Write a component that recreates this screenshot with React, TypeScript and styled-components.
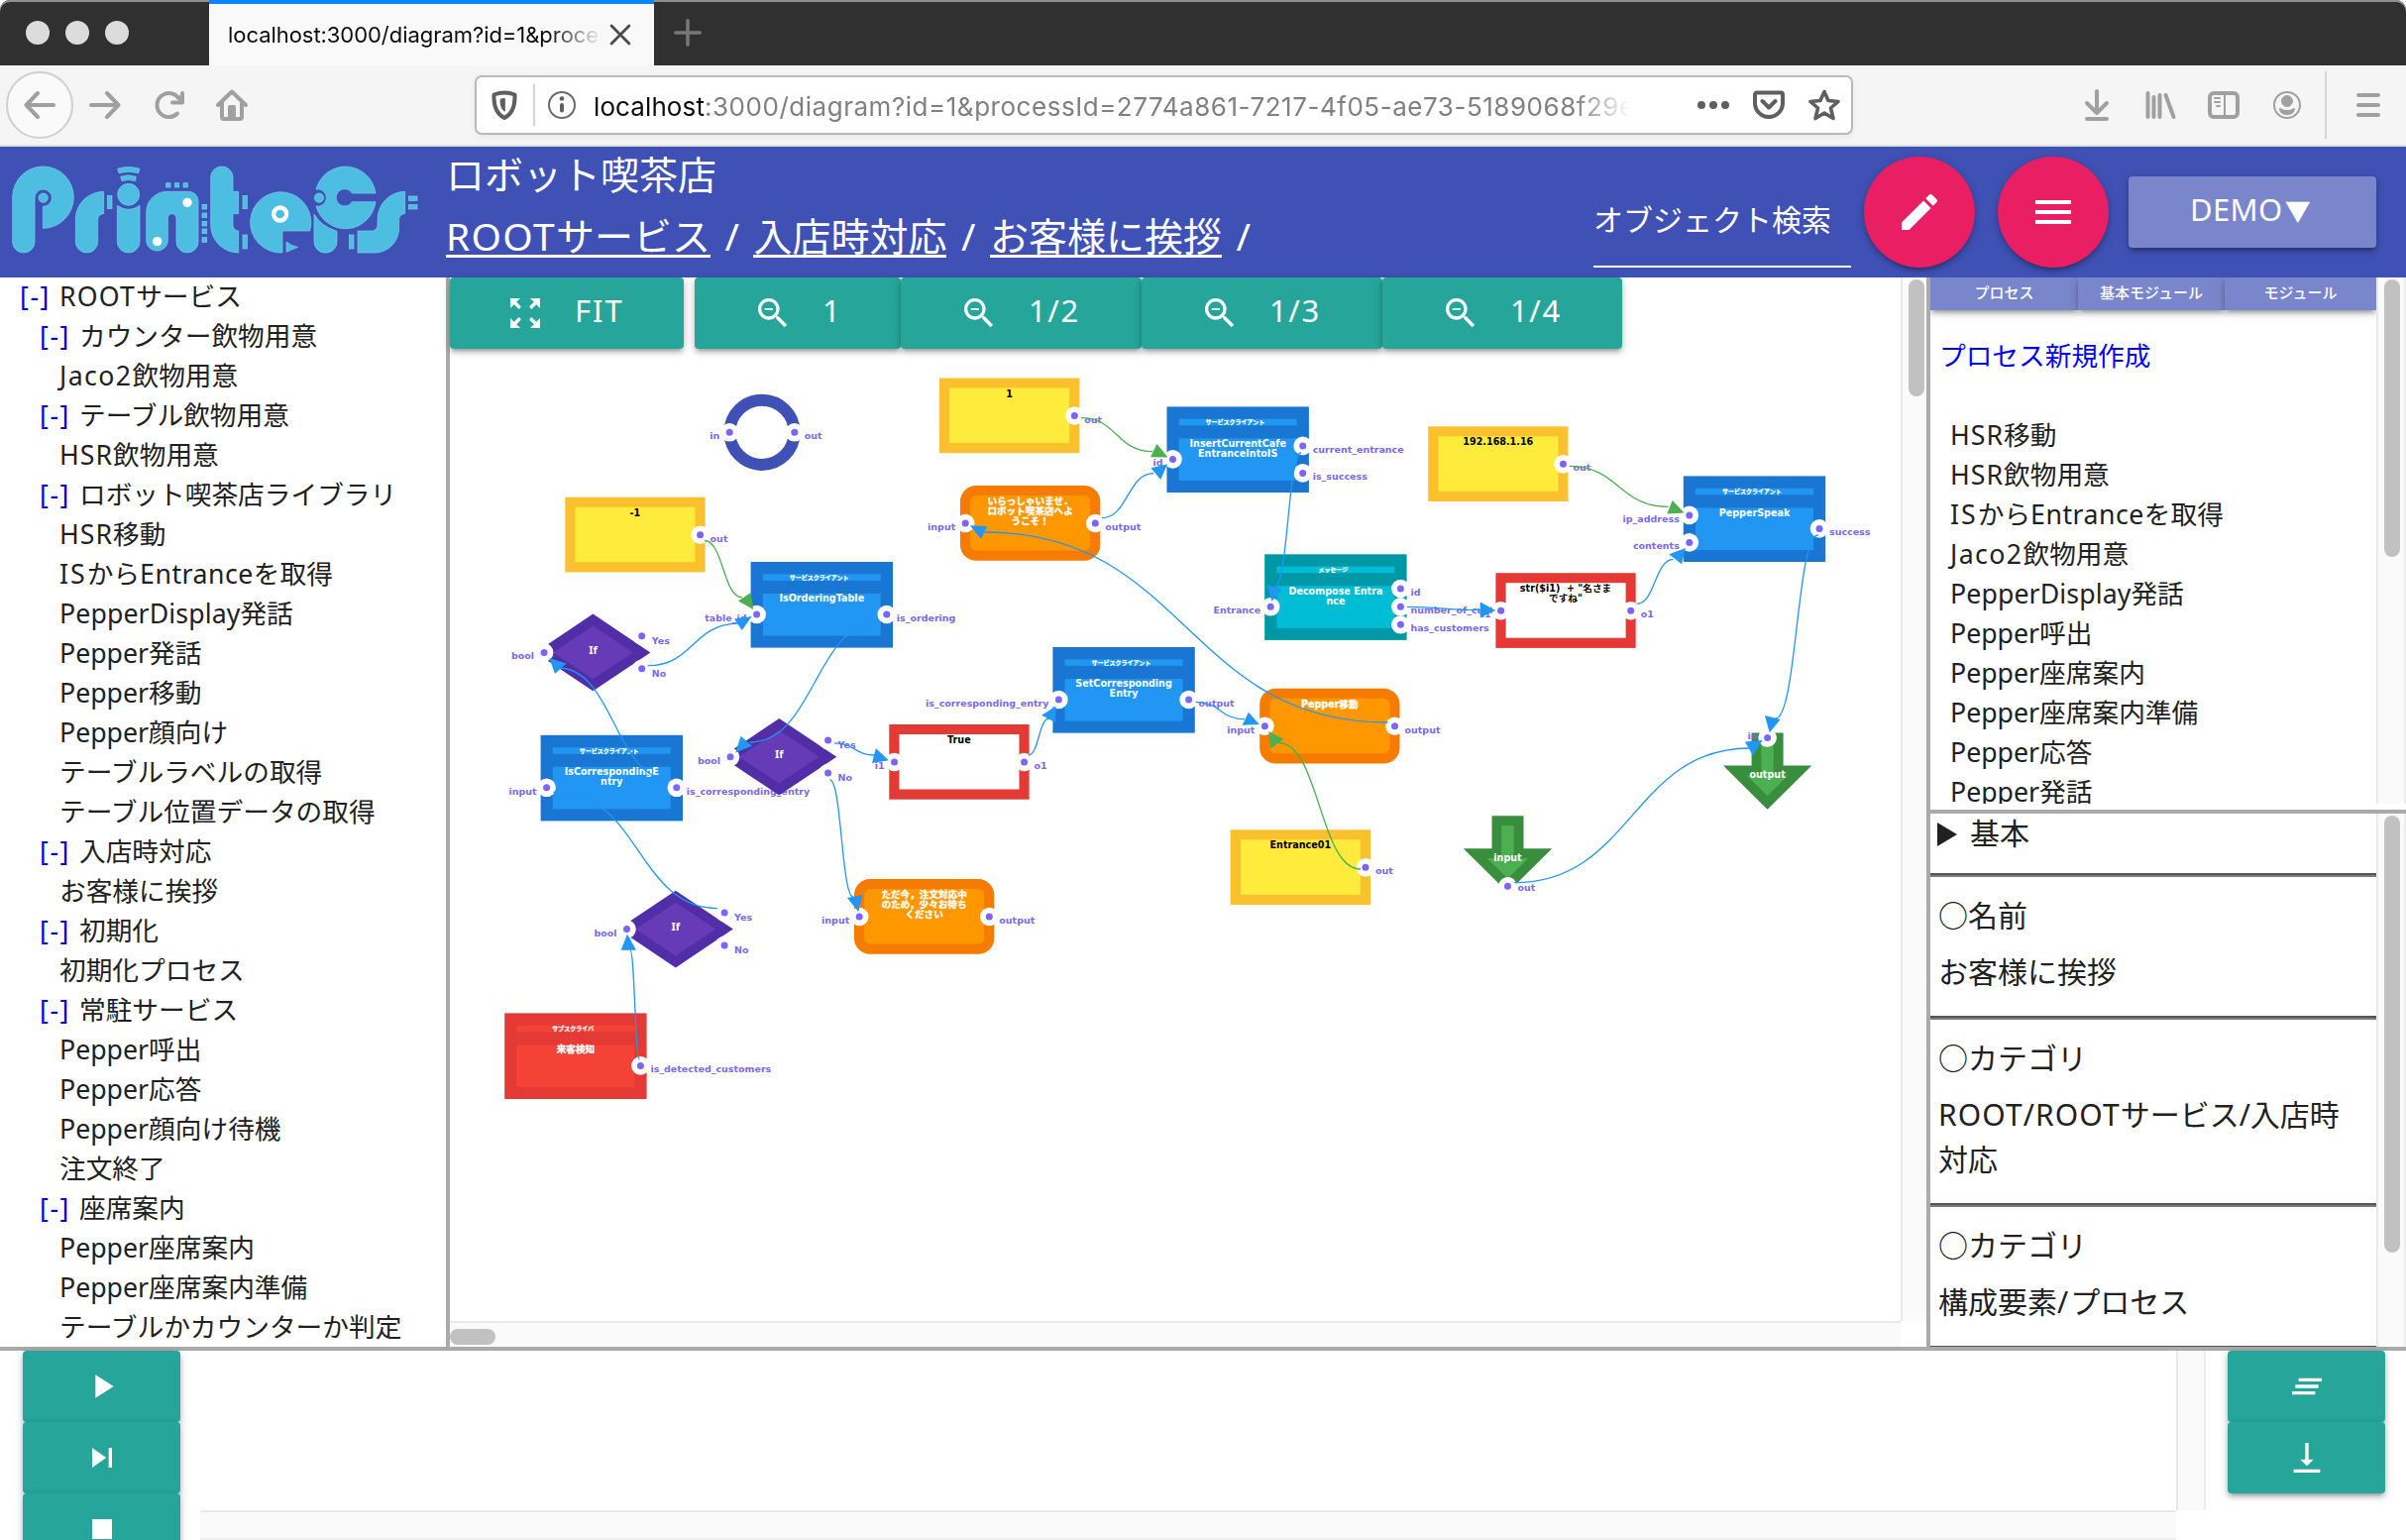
import React from "react";
import styled, { createGlobalStyle } from "styled-components";
import {
  MdEdit, MdMenu, MdZoomOutMap, MdZoomOut, MdPlayArrow, MdSkipNext, MdStop,
  MdClearAll, MdVerticalAlignBottom,
} from "react-icons/md";

const Global = createGlobalStyle`
  *{box-sizing:border-box}
  body{margin:0;background:#fff;overflow:hidden}
`;
const sans = `"Noto Sans","Noto Sans CJK JP",sans-serif`;
const depth = `0 4px 4px rgba(0,0,0,.14),0 6px 2px -4px rgba(0,0,0,.12),0 2px 10px rgba(0,0,0,.2)`;

const Page = styled.div`
  width:2428px;height:1554px;display:flex;flex-direction:column;overflow:hidden;
  font-family:${sans};color:#212121;background:#fff;
`;

/* ---------- browser chrome ---------- */
const TitleBar = styled.div`
  height:66px;flex:none;display:flex;background:#303030;border-radius:10px 10px 0 0;
  box-shadow:inset 0 2px 0 #8f8f8f;overflow:hidden;
`;
const Lights = styled.div`
  width:211px;padding-left:26px;display:flex;align-items:center;gap:16px;
`;
const Light = styled.i`width:24px;height:24px;border-radius:50%;background:#dcdcdc;`;
const BrowserTab = styled.div`
  width:449px;height:66px;background:#f9f9fa;border-top:4px solid #0a84ff;
  display:flex;align-items:center;padding:0 23px 0 19px;justify-content:space-between;
`;
const Fade = styled.div<{ $w: number }>`
  width:${p => p.$w}px;overflow:hidden;white-space:nowrap;
  mask-image:linear-gradient(to right,#000 calc(100% - 56px),transparent);
`;
const TabTitle = styled(Fade)`font:22px Inter,sans-serif;line-height:30px;color:#0c0c0d;letter-spacing:-.05px;`;
const PlusBox = styled.div`width:68px;display:flex;align-items:center;justify-content:center;`;
const NavBar = styled.div`
  height:82px;flex:none;background:#f5f5f6;border-bottom:2px solid #e0e0e0;display:flex;align-items:center;
`;
const BackCircle = styled.div`
  width:68px;height:68px;margin-left:6px;border:2px solid #cfcfcf;border-radius:50%;background:#fafafa;
  display:flex;align-items:center;justify-content:center;
`;
const NavIcons = styled.div`display:flex;gap:32px;margin-left:16px;width:389px;`;
const UrlBox = styled.div`
  width:1391px;height:60px;border:2px solid #b9b9ba;border-radius:7px;background:#fff;
  box-shadow:0 2px 6px rgba(0,0,0,.06);display:flex;align-items:center;padding-left:12px;
`;
const VLine = styled.i<{ $h: number }>`width:2px;height:${p => p.$h}px;background:#d4d4d5;`;
const UrlText = styled(Fade)`
  font:26px Inter,sans-serif;line-height:40px;color:#808080;margin-left:16px;letter-spacing:.53px;padding-top:3px;
  b{font-weight:400;color:#0c0c0d;letter-spacing:.1px}
`;
const UrlTools = styled.div`display:flex;gap:24px;margin-left:68px;align-items:center;`;
const RightTools = styled.div`display:flex;align-items:center;margin-left:auto;padding-right:22px;gap:32px;`;
const MenuGroup = styled.div`display:flex;align-items:center;gap:26px;margin-left:-10px;`;

type IconP = { children: React.ReactNode; s?: number; c?: string; w?: number };
const Ico = ({ children, s = 32, c = "#a0a0a1", w = 4 }: IconP) => (
  <svg width={s} height={s} viewBox="0 0 32 32" fill="none" stroke={c} strokeWidth={w} strokeLinecap="round" strokeLinejoin="round">{children}</svg>
);

/* ---------- app header ---------- */
const Header = styled.header`
  height:132px;flex:none;background:#3f51b5;display:flex;color:#fff;
`;
const LogoBox = styled.div`width:450px;`;
const Titles = styled.div`width:1158px;font-size:39px;line-height:62px;white-space:nowrap;`;
const TitleLine = styled.div`height:62px;margin-top:-3px;`;
const Crumbs = styled.div`display:flex;`;
const Crumb = styled.span`
  height:53px;border-bottom:3px solid #fff;
`;
const Slash = styled.span`width:43.5px;text-align:center;`;
const Latin = styled.span<{ $ls: number }>`letter-spacing:${p => p.$ls}px;`;
const Search = styled.div`
  width:260px;height:122px;border-bottom:2px solid #fff;font-size:30px;line-height:44px;padding-top:52px;white-space:nowrap;
`;
const Round = styled.button`
  width:112px;height:112px;border:0;border-radius:50%;background:#e91e63;color:#fff;margin:10px 0 0 13px;
  display:flex;align-items:center;justify-content:center;box-shadow:${depth};padding:0;
  & + &{margin-left:23px}
`;
const Demo = styled.button`
  width:250px;height:72px;margin:30px 0 0 20px;border:0;border-radius:4px;background:#7986cb;color:#fff;
  font:31px ${sans};letter-spacing:.4px;box-shadow:${depth};padding:0 4px 6px 0;
  i{font-style:normal;font-size:26px;margin-left:2px}
`;

/* ---------- body ---------- */
const Body = styled.div`height:1083px;flex:none;display:flex;border-bottom:4px solid #aaa;`;
const Tree = styled.nav`width:454px;border-right:4px solid #aaa;overflow:hidden;font-size:26.7px;`;
const TreeRow = styled.div<{ $indent: number }>`
  height:40px;line-height:38px;padding-left:${p => p.$indent}px;white-space:nowrap;display:flex;
`;
const Toggle = styled.span`width:40px;color:#0000ee;letter-spacing:1.6px;`;

const Work = styled.main`width:1490px;display:flex;flex-direction:column;`;
const WorkRow = styled.div`display:flex;height:1053px;`;
const Canvas = styled.div`width:1464px;height:1053px;position:relative;`;
const Bar = styled.div`display:flex;position:relative;z-index:1;`;
const ZoomBtn = styled.button<{ $w: number; $gap?: number; $ls?: number }>`
  width:${p => p.$w}px;height:72px;margin-right:${p => p.$gap ?? 0}px;border:0;background:#26a69a;color:#fff;
  border-radius:4px;box-shadow:${depth};font:31px ${sans};letter-spacing:${p => p.$ls ?? 1.6}px;
  display:flex;align-items:center;padding:0 0 0 ${p => (p.$gap ? 56 : 59)}px;gap:30px;
  span{margin-top:-7px}
`;
const DiagramSvg = styled.svg`position:absolute;left:0;top:0;`;
const VTrack = styled.div`
  width:26px;height:100%;background:#fafafa;border-left:2px solid #e8e8e8;padding:2px 2px 0 6px;flex:none;
`;
const WideTrack = styled(VTrack)`width:30px;border-right:2px solid #ededed;padding-right:4px;`;
const VThumb = styled.div<{ $h: number }>`width:16px;height:${p => p.$h}px;border-radius:8px;background:#c1c1c1;`;
const HTrack = styled.div`
  width:1464px;height:26px;border-top:2px solid #e8e8e8;background:#fafafa;padding-top:6px;
`;
const HThumb = styled.div`width:46px;height:16px;border-radius:8px;background:#c1c1c1;`;

const Side = styled.aside`width:484px;border-left:4px solid #aaa;display:flex;flex-direction:column;`;
const Upper = styled.section`height:531px;display:flex;overflow:hidden;`;
const Pane = styled.div`width:450px;`;
const Tabs = styled.div`display:flex;height:33px;`;
const Tab = styled.button<{ $w: number }>`
  width:${p => p.$w}px;height:33px;border:0;background:#7986cb;color:#fff;font:500 15px ${sans};padding:0 0 5px;
  box-shadow:${depth};
`;
const NewLink = styled.a`display:block;color:#0000ff;font-size:26.7px;line-height:40px;margin:26px 0 40px 9px;`;
const ListItem = styled.div`font-size:26.7px;height:40px;line-height:39px;padding-left:20px;white-space:nowrap;`;
const Lower = styled.section`
  height:542px;margin-top:6px;border-top:4px solid #aaa;display:flex;overflow:hidden;font-size:30px;line-height:45px;
`;
const Summary = styled.div`
  height:60px;padding:0 0 0 7px;display:flex;gap:13px;line-height:40px;
  &::before{content:"";width:0;height:0;margin-top:9px;border:solid transparent;border-width:12px 0 12px 20px;border-left-color:#212121}
`;
const Block = styled.div<{ $h: number }>`
  height:${p => p.$h}px;border-top:2px solid #555;box-shadow:inset 0 2px #7c7c7c;padding:18px 30px 0 8px;
`;
const Field = styled.div`height:57px;`;

/* ---------- console ---------- */
const Bottom = styled.footer`height:191px;display:flex;`;
const Stack = styled.div<{ $l: number; $r: number }>`
  padding:0 ${p => p.$r}px 0 ${p => p.$l}px;display:flex;flex-direction:column;flex:none;
`;
const Act = styled.button`
  width:159px;height:72px;flex:none;border:0;border-radius:4px;background:#26a69a;color:#fff;box-shadow:${depth};
  display:flex;align-items:center;justify-content:center;padding:0;
`;
const Console = styled.div`width:2024px;display:flex;flex-direction:column;`;
const ConsoleRow = styled.div`height:161px;display:flex;justify-content:flex-end;`;
const ConsoleTrack = styled(VTrack)`width:30px;border-right:2px solid #ededed;`;
const ConsoleH = styled.div`width:1994px;height:30px;background:#fafafa;border-top:2px solid #e8e8e8;border-bottom:2px solid #ededed;`;

/* ---------- diagram ---------- */
const NodeText = styled.text<{ $c?: string; $size?: number }>`
  font:bold ${p => p.$size ?? 9.6}px ${p => (p.$size ? sans : `"DejaVu Sans","Noto Sans CJK JP",sans-serif`)};
  fill:${p => p.$c ?? "#fff"};text-anchor:middle;white-space:pre;
`;
const Jp = styled(NodeText)`stroke:#fff;stroke-width:.35px;`;
const PortLabel = styled.text<{ $end?: boolean }>`
  font:bold 9.5px "DejaVu Sans",sans-serif;fill:#7b68ee;text-anchor:${p => (p.$end ? "end" : "start")};
`;
const KindText = styled.text`font:bold 6px "Noto Sans CJK JP",sans-serif;fill:#fff;stroke:#fff;stroke-width:.25px;text-anchor:middle;`;

type PortSpec = { x: number; y: number; label: string; end?: boolean; dx?: number; dy?: number };
const Port = ({ x, y, label, end, dx = 10, dy = 7 }: PortSpec) => (
  <g>
    <circle cx={x} cy={y} r={9.3} fill="#fff" />
    <circle cx={x} cy={y} r={3.5} fill="#7c65ff" />
    <PortLabel $end={end} x={end ? x - dx : x + dx} y={y + dy}>{label}</PortLabel>
  </g>
);

type BoxP = { x: number; y: number; kind: "value" | "expr" | "speak"; lines: string[]; ins?: string; out: string };
const boxColors = { value: ["#fbc02d", "#ffeb3b"], expr: ["#e53935", "#fff"], speak: ["#f57c00", "#ff9800"] };
const Box = ({ x, y, kind, lines, ins, out }: BoxP) => {
  const [edge, fill] = boxColors[kind];
  const round = kind === "speak";
  const Line = round ? Jp : NodeText;
  return (
    <g>
      <rect x={x} y={y} width={141.3} height={75.7} rx={round ? 16 : 0} fill={edge} />
      <rect x={x + 10.2} y={y + 10} width={121} height={55.5} rx={round ? 6 : 0} fill={fill} />
      {lines.map((l, i) => (
        <Line key={i} $c={round ? "#fff" : "#000"} x={x + 70.6} y={y + 19 + i * 10}>{l}</Line>
      ))}
      {ins && <Port x={x + 5.2} y={y + 38} label={ins} end />}
      <Port x={x + 136.3} y={y + 38} label={out} />
    </g>
  );
};

type SvcP = { x: number; y: number; c: [string, string]; kind: string; lines: string[]; ins: string[]; outs: string[]; jp?: boolean };
const offsets: Record<number, number[]> = { 0: [], 1: [53], 2: [39.5, 67], 3: [34.7, 53, 71] };
const Svc = ({ x, y, c, kind, lines, ins, outs, jp }: SvcP) => {
  const Line = jp ? Jp : NodeText;
  return (
    <g>
      <rect x={x} y={y} width={143.4} height={86.6} fill={c[0]} />
      <rect x={x + 12.2} y={y + 12.3} width={119} height={6.6} fill={c[1]} />
      <rect x={x + 12.2} y={y + 32} width={119} height={42.6} fill={c[1]} />
      <KindText x={x + 69} y={y + 18}>{kind}</KindText>
      {lines.map((l, i) => <Line key={i} x={x + 71.7} y={y + (jp ? 39.3 : 40.3) + i * 10}>{l}</Line>)}
      {ins.map((l, i) => <Port key={l} x={x + 6} y={y + offsets[ins.length][i]} label={l} end />)}
      {outs.map((l, i) => <Port key={l} x={x + 137.2} y={y + offsets[outs.length][i]} label={l} />)}
    </g>
  );
};

const Cond = ({ x, y }: { x: number; y: number }) => (
  <g>
    <path d={`M${x - 58},${y}L${x},${y - 38.8}L${x + 58},${y}L${x},${y + 38.8}Z`} fill="#512da8" />
    <path d={`M${x - 40.5},${y}L${x},${y - 26.8}L${x + 40.5},${y}L${x},${y + 26.8}Z`} fill="#673ab7" />
    <NodeText $size={11} x={x} y={y + 1.2}>If</NodeText>
    <Port x={x - 49.3} y={y} label="bool" end />
    <Port x={x + 49.3} y={y - 16.7} label="Yes" dy={8} />
    <Port x={x + 49.3} y={y + 16.3} label="No" dy={8} />
  </g>
);

const Terminal = ({ x, y, label }: { x: number; y: number; label: string }) => (
  <g>
    <path d={`M${x - 16},${y}h32v33h28.7L${x},${y + 77.2}L${x - 44.7},${y + 33}h28.7Z`} fill="#388e3c" />
    <path d={`M${x - 6.2},${y + 9.8}h12.4v33h14.6L${x},${y + 63.4}L${x - 20.8},${y + 42.8}h14.6Z`} fill="#4caf50" />
    <NodeText x={x} y={y + 45.3}>{label}</NodeText>
  </g>
);

const G = "#4caf50", B = "#2196f3";
/* colour, start x/y, curve end x/y, arrow head corners */
const edges: [string, number, number, number, number, string][] = [
  [G, 1091, 421.7, 1163, 455.7, "1178.6,461.5 1167.5,448 1161,461.3"],
  [B, 1112, 522.7, 1164, 477.7, "1178.2,468.3 1161.4,472.3 1171.3,484"],
  [B, 1400.6, 729, 993.8, 537, "978.8,530.3 996.4,531 990,543.7"],
  [B, 1313, 457, 1286.5, 592, "1283.5,606.7 1278.5,590.3 1293.8,594.7"],
  [B, 1420, 612.4, 1494.3, 615.7, "1509.3,616 1493.7,607.5 1493.7,623.2"],
  [G, 1583.7, 470.4, 1683.5, 511.4, "1699.7,517.5 1687.7,505 1682.3,518.6"],
  [B, 1651.7, 609.3, 1688.7, 564.3, "1701,552.9 1684.3,559.3 1697,569.3"],
  [B, 1834.7, 540, 1791.7, 725, "1785.7,739.3 1781,722.1 1796.7,726"],
  [B, 1528.3, 890.7, 1766, 755, "1778.7,747 1761,748.6 1769,762.5"],
  [G, 1373, 877, 1290, 749.5, "1280.4,738 1295.3,745.7 1282,755.7"],
  [B, 1206.5, 708.3, 1256, 725.7, "1270.8,731 1260,718.7 1253.6,731.7"],
  [B, 1037.8, 762, 1058.8, 725, "1065.7,712.7 1051,721.7 1065,729"],
  [G, 710.9, 545.5, 748.8, 602.9, "760.2,615 757.6,598 745,606.6"],
  [B, 653.8, 671.7, 745, 629.2, "758.7,622 741,624.4 748.8,636"],
  [B, 888, 628, 756.4, 749, "742.2,759.4 747.6,742.7 759,752.7"],
  [B, 842, 749.8, 882.7, 762, "896.9,767.2 883.9,755 880,770"],
  [B, 837.5, 787, 861, 905, "866.2,920 855,906 870.5,903"],
  [B, 677, 787, 563, 674, "554.3,664 571.6,669.5 560,679.8"],
  [B, 723.9, 916.6, 565, 801, "558,799 571,795 568,808"],
  [B, 645.4, 1069, 635.9, 958.8, "633,942.5 626.7,958.8 642,958.8"],
];

const blue: [string, string] = ["#1976d2", "#2196f3"];
const client = "サービスクライアント";

const Diagram = () => (
  <DiagramSvg width={1464} height={1053} viewBox="454 280 1464 1053">
    <circle cx={769} cy={436.3} r={32.6} fill="none" stroke="#3f51b5" strokeWidth={12} />
    <Port x={736.2} y={436.3} label="in" end />
    <Port x={801.8} y={436.3} label="out" />
    <Box kind="value" x={948} y={381.5} lines={["1"]} out="out" />
    <Box kind="value" x={570.3} y={501.7} lines={["-1"]} out="out" />
    <Box kind="value" x={1441.2} y={430.3} lines={["192.168.1.16"]} out="out" />
    <Box kind="value" x={1241.7} y={837.3} lines={["Entrance01"]} out="out" />
    <Svc c={blue} kind={client} x={1177.5} y={410.4} lines={["InsertCurrentCafe", "EntranceIntoIS"]} ins={["id"]} outs={["current_entrance", "is_success"]} />
    <Svc c={["#0097a7", "#00bcd4"]} kind="メッセージ" x={1276.2} y={559.3} lines={["Decompose Entra", "nce"]} ins={["Entrance"]} outs={["id", "number_of_customers", "has_customers"]} />
    <Svc c={blue} kind={client} x={1698.8} y={480.4} lines={["PepperSpeak"]} ins={["ip_address", "contents"]} outs={["success"]} />
    <Svc c={blue} kind={client} x={1062.4} y={653} lines={["SetCorresponding", "Entry"]} ins={["is_corresponding_entry"]} outs={["output"]} />
    <Svc c={blue} kind={client} x={757.6} y={567} lines={["IsOrderingTable"]} ins={["table_id"]} outs={["is_ordering"]} />
    <Svc c={blue} kind={client} x={545.6} y={741.8} lines={["IsCorrespondingE", "ntry"]} ins={["input"]} outs={["is_corresponding_entry"]} />
    <Svc jp c={["#e53935", "#f44336"]} kind="サブスクライバ" x={509.2} y={1022.4} lines={["来客検知"]} ins={[]} outs={["is_detected_customers"]} />
    <Box kind="speak" x={969} y={490} lines={["いらっしゃいませ．", "ロボット喫茶店へよ", "うこそ！"]} ins="input" out="output" />
    <Box kind="speak" x={1271.2} y={694.7} lines={["Pepper移動"]} ins="input" out="output" />
    <Box kind="speak" x={862} y={887} lines={["ただ今，注文対応中", "のため，少々お待ち", "ください"]} ins="input" out="output" />
    <Box kind="expr" x={897.3} y={731} lines={["True"]} ins="i1" out="o1" />
    <Box kind="expr" x={1509.4} y={578.2} lines={['str($i1)  + "名さま', 'ですね"']} ins="i1" out="o1" />
    <Cond x={598.4} y={658.4} />
    <Cond x={786.3} y={763.8} />
    <Cond x={681.8} y={937.6} />
    <Terminal x={1783.6} y={739.6} label="output" />
    <Port x={1783.6} y={744.5} label="in" end dy={1.5} />
    <Terminal x={1521.5} y={823.2} label="input" />
    <Port x={1521.5} y={894.3} label="out" dy={4.4} />
    {edges.map(([c, x1, y1, x2, y2, head], i) => {
      const m = (x1 + x2) / 2;
      return (
        <g key={i}>
          <path d={`M${x1},${y1}C${m},${y1} ${m},${y2} ${x2},${y2}`} fill="none" stroke={c} strokeWidth={1.3} />
          <polygon points={head} fill={c} />
        </g>
      );
    })}
  </DiagramSvg>
);

const Logo = () => (
  <svg width={440} height={132} viewBox="0 24 1320 396">
    <g fill="#4dbde1" stroke="#7fd0ee" strokeWidth={2}>
      <path d="M38,312V177A92.5,93 0 0 1 223,177A93,94 0 0 1 130,271V205A26,26 0 1 0 105,179V312A33.5,33 0 0 1 38,312Z" />
      <circle cx={131} cy={179} r={14} />
      <path d="M229,312V242A85,83 0 0 1 314,160V227A18,18 0 0 0 296,244V312A33.5,33 0 0 1 229,312Z" />
      <path d="M356,91Q389,80 423,91L419,104Q389,95 360,104Z" />
      <path d="M365,115Q389,106 412,115L409,128Q389,121 369,128Z" />
      <circle cx={389} cy={169} r={33} />
      <path d="M355,202Q389,226 423,202V312A34,33 0 0 1 355,312Z" />
      <path d="M443,312V222A62,62 0 0 1 505,160H572A28,28 0 0 1 600,188V312A33,33 0 0 1 534,312V240A13,13 0 0 0 508,240V312A33,33 0 0 1 443,312Z" />
      <path d="M638,117A33.5,33 0 0 1 705,117V160H722V227H705V262A17,17 0 0 0 722,279V345A84,84 0 0 1 638,262Z" />
      <path d="M855,345A92,92 0 1 1 938,279H855Z" />
      <path d="M867,312Q885,326 902,328L867,343Z" />
      <path d="M1137,165H1066A26,26 0 1 0 1066,191H1137A92,93 0 0 1 957,204A26,26 0 1 0 957,153A92,93 0 0 1 1137,165Z" />
      <circle cx={966} cy={179} r={14} />
      <path d="M951,228Q972,265 1020,280V312A34,33 0 0 1 951,312Z" />
      <path d="M1083,279H1126A17,17 0 0 0 1143,262V244A83,84 0 0 1 1226,160V227A17,17 0 0 0 1208,244V270A73,75 0 0 1 1135,345H1083Z" />
      {[[325, 172, 14, 40], [735, 172, 13, 40], [735, 291, 13, 42], [1057, 291, 14, 42], [1237, 174, 26, 13], [1237, 200, 26, 13],
        [503, 134, 13, 13], [529, 134, 13, 13], [555, 134, 13, 13],
        [612, 199, 14, 14], [612, 225, 14, 14], [612, 250, 14, 14], [612, 273, 14, 14], [612, 299, 14, 14]].map(([x, y, w, h]) => (
        <rect key={`${x}-${y}`} x={x} y={y} width={w} height={h} />
      ))}
    </g>
    <circle cx={567} cy={193} r={14} fill="#fff" />
    <circle cx={476} cy={311} r={14} fill="#fff" />
    <circle cx={848} cy={228} r={19.5} fill="none" stroke="#fff" strokeWidth={13} />
  </svg>
);

/* tracking for the Latin words inside Japanese labels */
const tracking: Record<string, number> = { ROOT: 1.2, HSR: 1, IS: 2, Entrance: 0.5, Jaco2: 1.4, PepperDisplay: 0.1 };
const Mixed = ({ text }: { text: string }) => (
  <span>
    {text.split(/([A-Za-z0-9]+)/).filter(Boolean).map((run, i) =>
      tracking[run] ? <Latin key={i} $ls={tracking[run]}>{run}</Latin> : run)}
  </span>
);

const tree: [number, string][] = [
  [0, "ROOTサービス"], [1, "カウンター飲物用意"], [2, "Jaco2飲物用意"], [1, "テーブル飲物用意"], [2, "HSR飲物用意"],
  [1, "ロボット喫茶店ライブラリ"], [2, "HSR移動"], [2, "ISからEntranceを取得"], [2, "PepperDisplay発話"], [2, "Pepper発話"],
  [2, "Pepper移動"], [2, "Pepper顔向け"], [2, "テーブルラベルの取得"], [2, "テーブル位置データの取得"], [1, "入店時対応"],
  [2, "お客様に挨拶"], [1, "初期化"], [2, "初期化プロセス"], [1, "常駐サービス"], [2, "Pepper呼出"], [2, "Pepper応答"],
  [2, "Pepper顔向け待機"], [2, "注文終了"], [1, "座席案内"], [2, "Pepper座席案内"], [2, "Pepper座席案内準備"], [2, "テーブルかカウンターか判定"],
];
const processes = ["HSR移動", "HSR飲物用意", "ISからEntranceを取得", "Jaco2飲物用意", "PepperDisplay発話", "Pepper呼出",
  "Pepper座席案内", "Pepper座席案内準備", "Pepper応答", "Pepper発話"];

export default function App() {
  return (
    <>
      <Global />
      <Page lang="ja">
        <TitleBar>
          <Lights><Light /><Light /><Light /></Lights>
          <BrowserTab>
            <TabTitle $w={378}>localhost:3000/diagram?id=1&amp;processId=2774a861</TabTitle>
            <Ico s={22} c="#4a4a4b" w={4}><path d="M3 3L29 29M29 3L3 29" /></Ico>
          </BrowserTab>
          <PlusBox><Ico s={28} c="#77777a" w={4}><path d="M16 2V30M2 16H30" /></Ico></PlusBox>
        </TitleBar>
        <NavBar>
          <BackCircle><Ico><path d="M30 16H3M14 4L2.500 16L14 28" /></Ico></BackCircle>
          <NavIcons>
            <Ico><path d="M2 16H29M18 4L29.500 16L18 28" /></Ico>
            <Ico><path d="M25 24.500A12 12 0 1 1 26.500 9.500" /><path d="M30 4V13.500H20" /><path d="M24 9L30 13L30 6Z" fill="#a0a0a1" strokeWidth="1" /></Ico>
            <Ico><path d="M2 16L16 2.500L30 16M6 14V28A2 2 0 0 0 8 30H24A2 2 0 0 0 26 28V14" /><path d="M14 30V18H18V30" /><path d="M16 18V21M16 25V30" strokeWidth="3" /></Ico>
          </NavIcons>
          <UrlBox>
            <Ico c="#5f5f60"><path d="M16 3.500C20 3.500 24 4.500 26.500 5.500C27 17 24 25 16 29C8 25 5 17 5.500 5.500C8 4.500 12 3.500 16 3.500Z" /><path d="M16 9.500C14 9.500 13 10 12 10.500C12 16 13 20 16 22Z" fill="#5f5f60" strokeWidth="1" /></Ico>
            <VLine $h={42} style={{ marginLeft: 13 }} />
            <svg width={32} height={32} viewBox="0 0 32 32" style={{ marginLeft: 11 }}>
              <circle cx="16" cy="16" r="13" fill="none" stroke="#6a6a6b" strokeWidth="2" />
              <circle cx="16" cy="9.500" r="2.300" fill="#5f5f60" /><rect x="14" y="14" width="4" height="9.500" rx="2" fill="#5f5f60" />
            </svg>
            <UrlText $w={1046}><b>localhost</b>:3000/diagram?id=1&amp;processId=2774a861-7217-4f05-ae73-5189068f29e1c0</UrlText>
            <UrlTools>
              <Ico c="#5f5f60"><g fill="#5f5f60" stroke="none"><circle cx="4" cy="16" r="4" /><circle cx="16" cy="16" r="4" /><circle cx="28" cy="16" r="4" /></g></Ico>
              <Ico c="#5f5f60"><path d="M4 3.500H28A2 2 0 0 1 30 5.500V14A14 14 0 0 1 2 14V5.500A2 2 0 0 1 4 3.500Z" /><path d="M9.500 12L16 18.500L22.500 12" /></Ico>
              <Ico c="#5f5f60" w={3.6}><path d="M16 2.500L20 11.500L30 12.500L22.500 19L25 29.500L16 24L7 29.500L9.500 19L2 12.500L12 11.500Z" /></Ico>
            </UrlTools>
          </UrlBox>
          <RightTools>
            <Ico><path d="M16 2V24M6 14L16 24L26 14" /><path d="M6 30H26" /></Ico>
            <Ico><path d="M3.500 4V28M9.500 8V28M15.500 6V28M21.500 6L29.500 28" /></Ico>
            <Ico><rect x="2" y="4" width="28" height="24" rx="4" /><path d="M17 5V27" strokeWidth="2" /><path d="M7 9H12M7 13H12M9 17H12" strokeWidth="2" /></Ico>
            <Ico><circle cx="16" cy="16" r="13" strokeWidth="2" /><circle cx="16" cy="12" r="5.500" fill="#a0a0a1" strokeWidth="1" /><path d="M9 20Q16 24 23 20Q22 25 16 25Q10 25 9 20Z" fill="#a0a0a1" strokeWidth="2" /></Ico>
            <MenuGroup>
              <VLine $h={68} />
              <Ico><path d="M6 6H26M6 16H26M6 26H26" /></Ico>
            </MenuGroup>
          </RightTools>
        </NavBar>

        <Header>
          <LogoBox><Logo /></LogoBox>
          <Titles>
            <TitleLine>ロボット喫茶店</TitleLine>
            <Crumbs>
              <Crumb><Latin $ls={1.3}>ROOT</Latin>サービス</Crumb><Slash>/</Slash>
              <Crumb>入店時対応</Crumb><Slash>/</Slash>
              <Crumb>お客様に挨拶</Crumb><Slash>/</Slash>
            </Crumbs>
          </Titles>
          <Search>オブジェクト検索</Search>
          <Round><MdEdit size={48} /></Round>
          <Round><MdMenu size={48} /></Round>
          <Demo>DEMO<i>▼</i></Demo>
        </Header>

        <Body>
          <Tree>
            {tree.map(([level, name], i) => (
              <TreeRow key={i} $indent={level === 1 ? 40 : level === 0 ? 20 : 60}>
                {level < 2 && <Toggle>[-]</Toggle>}<Mixed text={name} />
              </TreeRow>
            ))}
          </Tree>
          <Work>
            <WorkRow>
              <Canvas>
                <Bar>
                  <ZoomBtn $w={236} $gap={11} $ls={2}><MdZoomOutMap size={40} /><span>FIT</span></ZoomBtn>
                  <ZoomBtn $w={208}><MdZoomOut size={40} /><span>1</span></ZoomBtn>
                  <ZoomBtn $w={243}><MdZoomOut size={40} /><span>1/2</span></ZoomBtn>
                  <ZoomBtn $w={243}><MdZoomOut size={40} /><span>1/3</span></ZoomBtn>
                  <ZoomBtn $w={242}><MdZoomOut size={40} /><span>1/4</span></ZoomBtn>
                </Bar>
                <Diagram />
              </Canvas>
              <VTrack><VThumb $h={118} /></VTrack>
            </WorkRow>
            <HTrack><HThumb /></HTrack>
          </Work>
          <Side>
            <Upper>
              <Pane>
                <Tabs>
                  <Tab $w={149}>プロセス</Tab><Tab $w={148}>基本モジュール</Tab><Tab $w={153}>モジュール</Tab>
                </Tabs>
                <NewLink>プロセス新規作成</NewLink>
                {processes.map(p => <ListItem key={p}><Mixed text={p} /></ListItem>)}
              </Pane>
              <WideTrack><VThumb $h={280} /></WideTrack>
            </Upper>
            <Lower>
              <Pane>
                <Summary>基本</Summary>
                <Block $h={144}><Field>○名前</Field>お客様に挨拶</Block>
                <Block $h={189}><Field>○カテゴリ</Field><Latin $ls={1.1}>ROOT/ROOT</Latin>サービス/入店時対応</Block>
                <Block $h={144}><Field>○カテゴリ</Field>構成要素<Latin $ls={2}>/</Latin>プロセス</Block>
                <Block $h={40} />
              </Pane>
              <WideTrack><VThumb $h={441} /></WideTrack>
            </Lower>
          </Side>
        </Body>

        <Bottom>
          <Stack $l={23} $r={20}>
            <Act><MdPlayArrow size={40} /></Act>
            <Act><MdSkipNext size={40} /></Act>
            <Act><MdStop size={40} /></Act>
          </Stack>
          <Console>
            <ConsoleRow><ConsoleTrack /></ConsoleRow>
            <ConsoleH />
          </Console>
          <Stack $l={22} $r={21}>
            <Act><MdClearAll size={40} /></Act>
            <Act><MdVerticalAlignBottom size={40} /></Act>
          </Stack>
        </Bottom>
      </Page>
    </>
  );
}
